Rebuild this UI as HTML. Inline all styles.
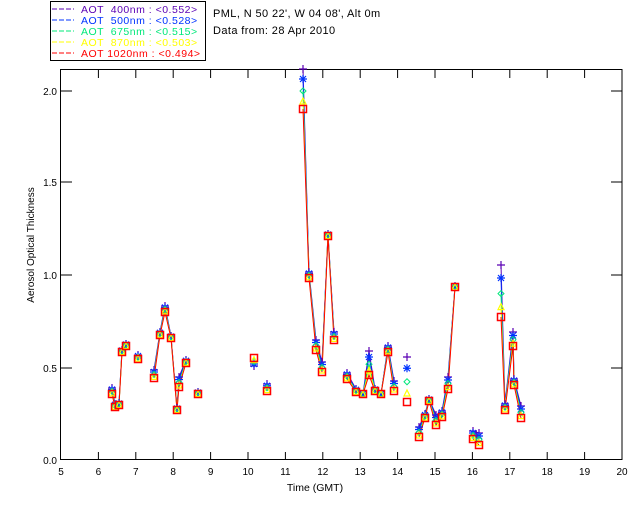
<!DOCTYPE html>
<html><head><meta charset="utf-8"><style>
html,body{margin:0;padding:0;background:#fff;width:640px;height:512px;overflow:hidden}
svg{display:block}
text{font-family:"Liberation Sans",sans-serif}
</style></head><body>
<svg id="s" width="640" height="512" xmlns="http://www.w3.org/2000/svg">
<rect x="0" y="0" width="640" height="512" fill="#fff"/>
<rect x="50.5" y="1.5" width="155" height="59" fill="none" stroke="#000" stroke-width="1"/>
<g font-size="10.5" letter-spacing="0.5">
<line x1="52" y1="9" x2="74" y2="9" stroke="#5a00b4" stroke-dasharray="5,2"/>
<text x="81" y="13" fill="#5a00b4" xml:space="preserve">AOT  400nm : &lt;0.552&gt;</text>
<line x1="52" y1="20" x2="74" y2="20" stroke="#0033ff" stroke-dasharray="5,2"/>
<text x="81" y="24" fill="#0033ff" xml:space="preserve">AOT  500nm : &lt;0.528&gt;</text>
<line x1="52" y1="31" x2="74" y2="31" stroke="#00e87a" stroke-dasharray="5,2"/>
<text x="81" y="35" fill="#00e87a" xml:space="preserve">AOT  675nm : &lt;0.515&gt;</text>
<line x1="52" y1="42" x2="74" y2="42" stroke="#ffff00" stroke-dasharray="5,2"/>
<text x="81" y="46" fill="#ffff00" xml:space="preserve">AOT  870nm : &lt;0.503&gt;</text>
<line x1="52" y1="53" x2="74" y2="53" stroke="#ff0000" stroke-dasharray="5,2"/>
<text x="81" y="57" fill="#ff0000" xml:space="preserve">AOT 1020nm : &lt;0.494&gt;</text>
</g>
<text x="213" y="17" font-size="11" letter-spacing="0.4">PML, N 50 22', W 04 08', Alt 0m</text>
<text x="213" y="34" font-size="11" letter-spacing="0.4">Data from: 28 Apr 2010</text>
<rect x="60.5" y="69.5" width="561.5" height="390" fill="none" stroke="#000" stroke-width="1"/>
<g id="ax" stroke="#000" stroke-width="1"></g>
<g font-size="10" text-anchor="end">
<text x="57" y="95">2.0</text><text x="57" y="186">1.5</text><text x="57" y="279">1.0</text><text x="57" y="372">0.5</text><text x="57" y="464">0.0</text>
</g>
<g id="xl" font-size="10" text-anchor="middle"></g>
<text x="315" y="491" font-size="10.5" text-anchor="middle">Time (GMT)</text>
<text transform="translate(34,245) rotate(-90)" font-size="10" text-anchor="middle">Aerosol Optical Thickness</text>
<g id="d"></g>
</svg>
<script>
var NS="http://www.w3.org/2000/svg";
function el(p,t,a){var e=document.createElementNS(NS,t);for(var k in a)e.setAttribute(k,a[k]);p.appendChild(e);return e;}
var ax=document.getElementById('ax'),xl=document.getElementById('xl');
for(var h=5;h<=20;h++){var x=61+(h-5)*37.4;
 if(h>5&&h<20){el(ax,'line',{x1:x,y1:70,x2:x,y2:78});el(ax,'line',{x1:x,y1:459,x2:x,y2:452});}
 var t=el(xl,'text',{x:x,y:475});t.textContent=h;}
[91,182,275,368].forEach(function(y){el(ax,'line',{x1:61,y1:y,x2:72,y2:y});el(ax,'line',{x1:622,y1:y,x2:611,y2:y});});
var P=[[112,394,6],[115,407,3],[119,405,2],[122,352,2],[126,346,2],[138,359,4],[154,378,8],[160,335,3],[165,312,6],[171,338,2],[177,410,2],[179,387,10],[186,363,3],[198,394,2],[254,358,-8],[267,391,7],[303,109,40],[309,278,6],[316,350,10],[322,372,10],[328,236,2],[334,340,8],[347,379,6],[356,392,3],[363,394,0],[369,375,24],[375,391,2],[381,394,0],[388,352,6],[394,391,10],[407,402,45],[419,437,10],[425,418,4],[429,401,2],[436,425,10],[442,417,6],[448,389,12],[455,287,1],[473,439,8],[479,445,12],[501,317,52],[505,410,6],[513,346,14],[514,385,6],[521,418,12]];
var d=document.getElementById('d');
var cols=[['#5a00b4',1],['#0033ff',0.75],['#00e87a',0.45],['#ffff00',0.2],['#ff0000',0]];
cols.forEach(function(c){var seg=[];
 function flush(){if(seg.length>1)el(d,'polyline',{points:seg.join(' '),fill:'none',stroke:c[0],'stroke-width':1});seg=[];}
 for(var i=0;i<P.length;i++){if(i>0&&P[i][0]-P[i-1][0]>10)flush();seg.push(P[i][0]+','+(P[i][1]-P[i][2]*c[1]));}
 flush();});
P.forEach(function(p){var x=p[0],y=p[1],dy=p[2];
 var yp=y-dy,yb=y-dy*0.75,yg=y-dy*0.45,yy=y-dy*0.2;
 el(d,'path',{d:'M'+(x-4)+' '+yp+'H'+(x+4)+'M'+x+' '+(yp-4)+'V'+(yp+4),stroke:'#5a00b4','stroke-width':1.2});
 el(d,'path',{d:'M'+(x-4)+' '+yb+'H'+(x+4)+'M'+x+' '+(yb-4)+'V'+(yb+4)+'M'+(x-3)+' '+(yb-3)+'L'+(x+3)+' '+(yb+3)+'M'+(x+3)+' '+(yb-3)+'L'+(x-3)+' '+(yb+3),stroke:'#0033ff','stroke-width':1.2});
 el(d,'path',{d:'M'+x+' '+(yg-3)+'L'+(x+3)+' '+yg+'L'+x+' '+(yg+3)+'L'+(x-3)+' '+yg+'Z',stroke:'#00e87a',fill:'none','stroke-width':1});
 el(d,'path',{d:'M'+x+' '+(yy-3)+'L'+(x+3)+' '+(yy+3)+'L'+(x-3)+' '+(yy+3)+'Z',stroke:'#ffff00',fill:'none','stroke-width':1.2});
 el(d,'rect',{x:x-3.5,y:y-3.5,width:7,height:7,fill:'none',stroke:'#ff0000','stroke-width':1.5});
});
</script>
</body></html>
